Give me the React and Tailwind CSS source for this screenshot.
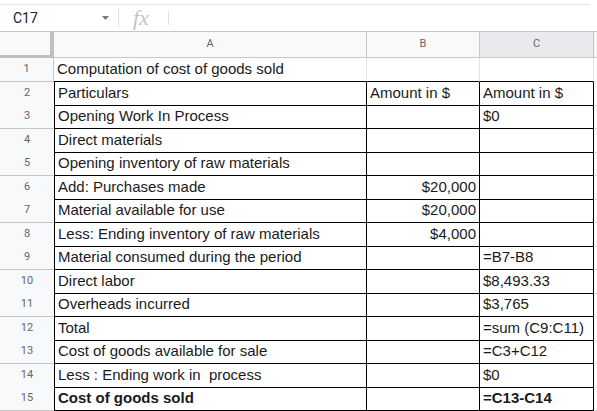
import React from "react";

const rows = [
  { a: "Computation of cost of goods sold", b: "", c: "" },
  { a: "Particulars", b: "Amount in $", c: "Amount in $", bLeft: true },
  { a: "Opening Work In Process", b: "", c: "$0" },
  { a: "Direct materials", b: "", c: "" },
  { a: "Opening inventory of raw materials", b: "", c: "" },
  { a: "Add: Purchases made", b: "$20,000", c: "" },
  { a: "Material available for use", b: "$20,000", c: "" },
  { a: "Less: Ending inventory of raw materials", b: "$4,000", c: "" },
  { a: "Material consumed during the period", b: "", c: "=B7-B8" },
  { a: "Direct labor", b: "", c: "$8,493.33" },
  { a: "Overheads incurred", b: "", c: "$3,765" },
  { a: "Total", b: "", c: "=sum (C9:C11)" },
  { a: "Cost of goods available for sale", b: "", c: "=C3+C12" },
  { a: "Less : Ending work in  process", b: "", c: "$0" },
  { a: "Cost of goods sold", b: "", c: "=C13-C14", bold: true },
];

function Cell({ first, className, children }) {
  // first row only has a black bottom edge, the rest are fully boxed
  if (first) {
    return (
      <div className={`flex items-center border-r border-r-[#e2e3e3] border-b border-b-[#000] ${className}`}>
        {children}
      </div>
    );
  }
  return (
    <div className={`flex items-center border-r border-b border-[#000] ${className}`}>
      {children}
    </div>
  );
}

export default function App() {
  return (
    <div className="w-[597px] h-[411px] overflow-hidden bg-white font-['Liberation_Sans',Arial,sans-serif]">
      {/* Formula bar */}
      <div className="h-[32px] pt-[4px] flex flex-col">
        <div className="h-[1px] w-[590px] bg-[#e3e3e3]" />
        <div className="flex-1 flex items-center border-b border-[#c7c7c7]">
          <div className="w-[118px] flex items-center pl-[13px] pr-[8px]">
            <span className="flex-1 font-['Roboto',sans-serif] text-[14px] text-[#202124]">C17</span>
            <svg width="7" height="4" viewBox="0 0 7 4" className="mr-[1px]">
              <path d="M0 0 L7 0 L3.5 4 Z" fill="#777" />
            </svg>
          </div>
          <div className="w-px h-[18px] bg-[#e0e0e0]" />
          <span className="ml-[14px] w-[35px] font-['Liberation_Serif',serif] italic text-[22px] leading-none text-[#c4c4c4]">
            fx
          </span>
          <div className="w-px h-[14px] bg-[#e0e0e0]" />
        </div>
      </div>

      {/* Column headers */}
      <div className="grid grid-cols-[54px_313px_113px_114px_1fr] h-[26px] font-['Roboto',sans-serif] text-[11px] text-[#666]">
        <div className="bg-[#f8f9fa] border-r-[4px] border-b-[3px] border-[#c0c0c0]" />
        <div className="bg-[#f8f9fa] border-r border-b border-[#c7c7c7] flex items-center justify-center">A</div>
        <div className="bg-[#f8f9fa] border-r border-b border-[#c7c7c7] flex items-center justify-center">B</div>
        <div className="bg-[#e8eaed] border-r border-b border-[#c7c7c7] flex items-center justify-center">C</div>
        <div className="bg-[#f8f9fa] border-b border-[#c7c7c7]" />
      </div>

      {/* Rows */}
      {rows.map((r, i) => {
        const first = i === 0;
        const h = i % 2 === 0 ? "h-[24px]" : "h-[23px]";
        return (
          <div
            key={i}
            className={`grid grid-cols-[54px_313px_113px_114px_1fr] ${h} text-[15px] text-[#1a1a1a] ${r.bold ? "font-bold" : ""}`}
          >
            <div
              className={`bg-[#f8f9fa] border-b border-[#c7c7c7] ${first ? "border-r" : ""} flex items-center justify-center font-['Roboto',sans-serif] font-normal text-[11px] text-[#666]`}
            >
              {i + 1}
            </div>
            <Cell first={first} className={`pl-[3px] whitespace-pre ${first ? "" : "border-l"}`}>
              {r.a}
            </Cell>
            <Cell first={first} className={r.bLeft ? "pl-[3px]" : "justify-end pr-[3px]"}>
              {r.b}
            </Cell>
            <Cell first={first} className="pl-[3px] whitespace-nowrap">
              {r.c}
            </Cell>
            <div className="border-b border-[#e2e3e3]" />
          </div>
        );
      })}
    </div>
  );
}
